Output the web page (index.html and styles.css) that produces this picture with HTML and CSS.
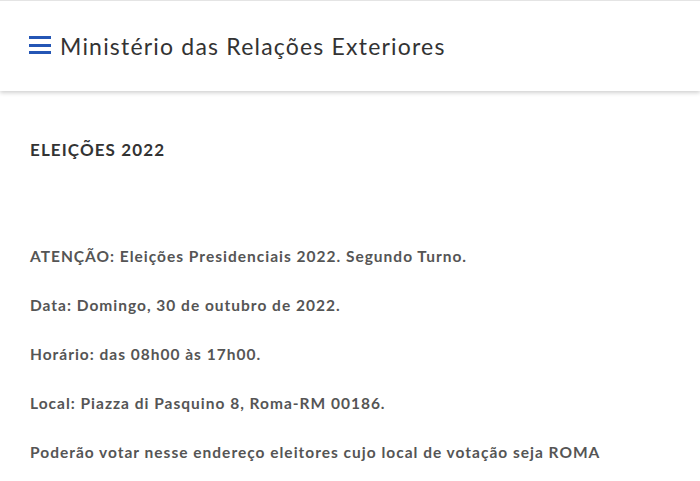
FILE: index.html
```html
<!DOCTYPE html>
<html lang="pt-BR">
<head>
<meta charset="utf-8">
<title>Ministério das Relações Exteriores</title>
<link rel="stylesheet" href="styles.css">
</head>
<body>
<header class="topbar">
  <svg class="menu-icon" width="22" height="19" viewBox="0 0 22 19" aria-hidden="true">
    <rect x="0" y="0" width="22" height="3" fill="#2456b5"/>
    <rect x="0" y="8" width="22" height="3" fill="#2456b5"/>
    <rect x="0" y="15" width="22" height="3" fill="#2456b5"/>
  </svg>
  <span class="site-title">Ministério das Relações Exteriores</span>
</header>
<main class="content">
  <h1 class="page-title">ELEIÇÕES 2022</h1>
  <div class="notice">
    <p>ATENÇÃO: Eleições Presidenciais 2022. Segundo Turno.</p>
    <p>Data: Domingo, 30 de outubro de 2022.</p>
    <p>Horário: das 08h00 às 17h00.</p>
    <p>Local: Piazza di Pasquino 8, Roma-RM 00186.</p>
    <p>Poderão votar nesse endereço eleitores cujo local de votação seja ROMA</p>
  </div>
</main>
</body>
</html>
```
FILE: styles.css
```css
html, body {
  margin: 0;
  padding: 0;
  background: #ffffff;
}
body {
  font-family: Lato, "Open Sans", sans-serif;
  color: #555555;
}
.topbar {
  height: 91px;
  display: flex;
  align-items: center;
  padding-left: 29px;
  gap: 9px;
  background: #ffffff;
  border-top: 1px solid #e4e4e4;
  box-sizing: border-box;
  box-shadow: 0 2px 4px rgba(0,0,0,0.18);
}
.menu-icon {
  display: block;
  margin-top: -1px;
}
.site-title {
  font-size: 23px;
  color: #333333;
  font-weight: 400;
  letter-spacing: 1.2px;
}
.content {
  padding: 44px 30px 0 30px;
}
.page-title {
  margin: 0;
  font-size: 17px;
  font-weight: 700;
  color: #333333;
  line-height: 30px;
  letter-spacing: 1.1px;
}
.notice {
  margin-top: 81px;
}
.notice p {
  margin: 0 0 29px 0;
  font-size: 15.5px;
  font-weight: 700;
  line-height: 20px;
  color: #555555;
  letter-spacing: 1px;
}
```
